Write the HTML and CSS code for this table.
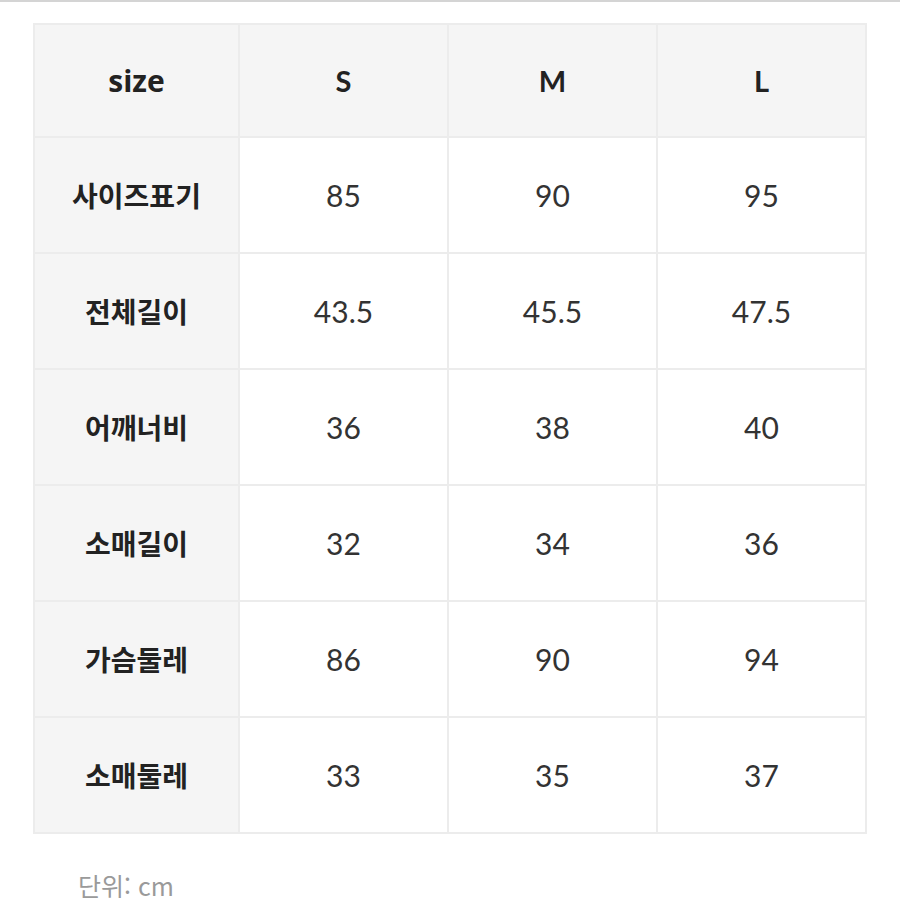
FILE: index.html
```html
<!DOCTYPE html>
<html lang="ko">
<head>
<meta charset="utf-8">
<link rel="stylesheet" href="styles.css">
</head>
<body>
<div class="topline"></div>
<div class="wrap">
<table class="size-table">
  <thead>
    <tr><th class="label size-word">size</th><th>S</th><th>M</th><th>L</th></tr>
  </thead>
  <tbody>
    <tr><th class="label">사이즈표기</th><td>85</td><td>90</td><td>95</td></tr>
    <tr><th class="label">전체길이</th><td>43.5</td><td>45.5</td><td>47.5</td></tr>
    <tr><th class="label">어깨너비</th><td>36</td><td>38</td><td>40</td></tr>
    <tr><th class="label">소매길이</th><td>32</td><td>34</td><td>36</td></tr>
    <tr><th class="label">가슴둘레</th><td>86</td><td>90</td><td>94</td></tr>
    <tr><th class="label">소매둘레</th><td>33</td><td>35</td><td>37</td></tr>
  </tbody>
</table>
<p class="unit">단위: cm</p>
</div>
</body>
</html>
```
FILE: styles.css
```css
html, body {
  margin: 0;
  padding: 0;
  background: #fff;
}
body {
  font-family: Lato, "Noto Sans CJK KR", sans-serif;
  color: #2a2a2a;
}
.topline {
  height: 2px;
  background: #d4d4d4;
}
.wrap {
  padding: 21px 0 0 33px;
}
.size-table {
  border-collapse: collapse;
  table-layout: fixed;
  width: 834px;
  border: 2px solid #ececec;
}
.size-table th,
.size-table td {
  border: 2px solid #ececec;
  text-align: center;
  vertical-align: middle;
  height: 114px;
  padding: 0;
}
.size-table thead th {
  height: 111px;
  background: #f5f5f5;
  font-weight: 700;
  font-size: 29px;
  color: #222;
}
.size-table th.label {
  width: 203px;
  background: #f5f5f5;
  font-family: "Noto Sans CJK KR", sans-serif;
  font-weight: 700;
  font-size: 28px;
  color: #222;
}
.size-table th.size-word {
  font-family: "Open Sans", sans-serif;
  font-size: 30px;
}
.size-table td {
  font-size: 30px;
  font-weight: 400;
  color: #333;
  background: #fff;
}
.unit {
  margin: 38px 0 0 45px;
  font-family: "Noto Sans CJK KR", sans-serif;
  font-size: 25px;
  line-height: 26px;
  color: #9a9a9a;
}
```
